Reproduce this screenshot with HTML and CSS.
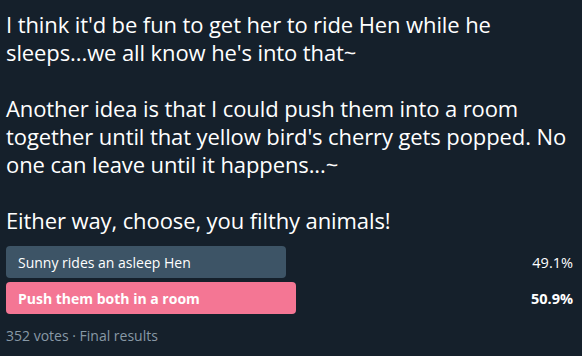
FILE: index.html
```html
<!DOCTYPE html>
<html lang="en">
<head>
    <meta charset="UTF-8">
    <meta name="viewport" content="width=device-width, initial-scale=1.0">
    <title>Poll</title>
    <link rel="stylesheet" href="styles.css">
</head>
<body>
    <article class="tweet">
        <div class="tweet-text">
            <p>I think it'd be fun to get her to ride Hen while he sleeps...we all know he's into that~</p>
            <p>Another idea is that I could push them into a room together until that yellow bird's cherry gets popped. No one can leave until it happens...~</p>
            <p>Either way, choose, you filthy animals!</p>
        </div>

        <div class="poll">
            <div class="poll-option">
                <div class="poll-track">
                    <div class="poll-bar" style="width: 49.1%"></div>
                    <span class="poll-label">Sunny rides an asleep Hen</span>
                </div>
                <span class="poll-pct">49.1%</span>
            </div>
            <div class="poll-option winner">
                <div class="poll-track">
                    <div class="poll-bar" style="width: 50.9%"></div>
                    <span class="poll-label">Push them both in a room</span>
                </div>
                <span class="poll-pct">50.9%</span>
            </div>
        </div>

        <footer class="poll-meta">352 votes · Final results</footer>
    </article>
</body>
</html>
```

FILE: styles.css
```css
:root {
    --bg: #15202b;
    --text: #ffffff;
    --text-secondary: #8899a6;
    --bar: #3d5466;
    --bar-win: #f47694;
    --font-base: 'Open Sans', 'Noto Sans', sans-serif;
}

* {
    margin: 0;
    padding: 0;
    box-sizing: border-box;
}

body {
    background: var(--bg);
    color: var(--text);
    font-family: var(--font-base);
    padding: 10px 9px 0 6px;
}

.tweet-text {
    font-size: 22px;
    line-height: 28px;
    letter-spacing: -0.1px;
    margin-right: -8px;
    margin-bottom: 12px;
}

.tweet-text p + p {
    margin-top: 28px;
}

.poll {
    display: flex;
    flex-direction: column;
    gap: 4px;
}

.poll-option {
    display: grid;
    align-items: center;
}

.poll-track,
.poll-pct {
    grid-area: 1 / 1;
}

.poll-track {
    position: relative;
    height: 32px;
    display: flex;
    align-items: center;
    margin-right: -3px;
}

.poll-bar {
    position: absolute;
    top: 0;
    left: 0;
    height: 100%;
    background: var(--bar);
    border-radius: 4px;
}

.poll-label {
    position: relative;
    padding-left: 12px;
    font-size: 14px;
}

.poll-pct {
    justify-self: end;
    font-size: 14.5px;
}

.winner .poll-bar {
    background: var(--bar-win);
}

.winner .poll-label,
.winner .poll-pct {
    font-weight: 700;
}

.poll-meta {
    margin-top: 12px;
    font-size: 14px;
    color: var(--text-secondary);
}
```
